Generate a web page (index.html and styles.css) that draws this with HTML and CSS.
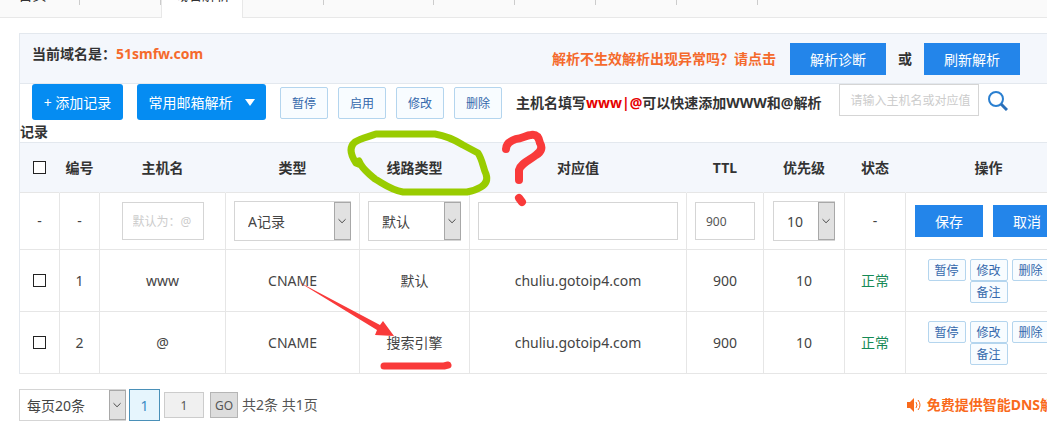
FILE: index.html
```html
<!DOCTYPE html>
<html lang="zh-CN">
<head>
    <meta charset="UTF-8">
    <meta name="viewport" content="width=device-width, initial-scale=1.0">
    <title>域名解析</title>
    <link rel="stylesheet" href="styles.css">
</head>
<body>
    <nav class="tabs">
        <a href="#" class="tab tab-first">首页</a>
        <a href="#" class="tab"></a>
        <a href="#" class="tab tab-active">域名解析</a>
        <a href="#" class="tab"></a>
        <a href="#" class="tab tab-wide"></a>
        <a href="#" class="tab"></a>
        <a href="#" class="tab"></a>
        <a href="#" class="tab"></a>
        <a href="#" class="tab"></a>
    </nav>

    <main class="panel">
        <div class="domain-bar">
            <div class="domain">当前域名是：<span class="orange">51smfw.com</span></div>
            <div class="diagnose">
                <span class="orange">解析不生效解析出现异常吗？请点击</span>
                <button type="button" class="btn-blue">解析诊断</button>
                <span>或</span>
                <button type="button" class="btn-blue">刷新解析</button>
            </div>
        </div>

        <form class="toolbar">
            <button type="button" class="btn-main btn-add">+ 添加记录</button>
            <button type="button" class="btn-main btn-mail">常用邮箱解析 <span class="caret"></span></button>
            <div class="batch">
                <button type="button" class="btn-light">暂停</button>
                <button type="button" class="btn-light">启用</button>
                <button type="button" class="btn-light">修改</button>
                <button type="button" class="btn-light">删除</button>
            </div>
            <p class="tip">主机名填写<span class="red">www|@</span>可以快速添加WWW和@解析</p>
            <input type="text" class="search" aria-label="搜索" placeholder="请输入主机名或对应值">
            <button type="submit" class="btn-search" aria-label="搜索">
                <svg width="20" height="20" viewBox="0 0 20 20">
                    <circle cx="8" cy="8" r="7" fill="none" stroke="#2a7fd0" stroke-width="2"/>
                    <path d="M13 13l6 6" stroke="#2a6fb8" stroke-width="3"/>
                </svg>
            </button>
        </form>
        <div class="caption">记录</div>

        <table class="records">
            <colgroup>
                <col class="c-check"><col class="c-no"><col class="c-host"><col class="c-type"><col class="c-line">
                <col class="c-value"><col class="c-ttl"><col class="c-prio"><col class="c-state"><col class="c-action">
            </colgroup>
            <thead>
                <tr>
                    <th><input type="checkbox" class="check" aria-label="全选"></th>
                    <th>编号</th>
                    <th>主机名</th>
                    <th>类型</th>
                    <th>线路类型</th>
                    <th>对应值</th>
                    <th>TTL</th>
                    <th>优先级</th>
                    <th>状态</th>
                    <th>操作</th>
                </tr>
            </thead>
            <tbody>
                <tr class="edit-row">
                    <td>-</td>
                    <td>-</td>
                    <td><input type="text" class="field field-host" aria-label="主机名" placeholder="默认为：@"></td>
                    <td>
                        <span class="select select-type">
                            <select aria-label="类型"><option>A记录</option><option>CNAME</option></select>
                            <svg class="arrow" viewBox="0 0 17 38"><path d="M4 17l4 4 4-4"/></svg>
                        </span>
                    </td>
                    <td>
                        <span class="select select-line">
                            <select aria-label="线路类型"><option>默认</option><option>搜索引擎</option></select>
                            <svg class="arrow" viewBox="0 0 17 38"><path d="M4 17l4 4 4-4"/></svg>
                        </span>
                    </td>
                    <td><input type="text" class="field field-value" aria-label="对应值"></td>
                    <td><input type="text" class="field field-ttl" aria-label="TTL" value="900"></td>
                    <td>
                        <span class="select select-prio">
                            <select aria-label="优先级"><option>10</option><option>20</option></select>
                            <svg class="arrow" viewBox="0 0 17 38"><path d="M4 17l4 4 4-4"/></svg>
                        </span>
                    </td>
                    <td>-</td>
                    <td>
                        <div class="edit-actions">
                            <button type="button" class="btn-blue btn-small">保存</button>
                            <button type="button" class="btn-blue btn-small">取消</button>
                        </div>
                    </td>
                </tr>
                <tr>
                    <td><input type="checkbox" class="check" aria-label="选择记录1"></td>
                    <td>1</td>
                    <td>www</td>
                    <td>CNAME</td>
                    <td>默认</td>
                    <td>chuliu.gotoip4.com</td>
                    <td>900</td>
                    <td>10</td>
                    <td class="normal">正常</td>
                    <td>
                        <div class="row-actions">
                            <button type="button" class="btn-mini">暂停</button>
                            <button type="button" class="btn-mini">修改</button>
                            <button type="button" class="btn-mini">删除</button>
                            <button type="button" class="btn-mini">备注</button>
                        </div>
                    </td>
                </tr>
                <tr>
                    <td><input type="checkbox" class="check" aria-label="选择记录2"></td>
                    <td>2</td>
                    <td>@</td>
                    <td>CNAME</td>
                    <td>搜索引擎</td>
                    <td>chuliu.gotoip4.com</td>
                    <td>900</td>
                    <td>10</td>
                    <td class="normal">正常</td>
                    <td>
                        <div class="row-actions">
                            <button type="button" class="btn-mini">暂停</button>
                            <button type="button" class="btn-mini">修改</button>
                            <button type="button" class="btn-mini">删除</button>
                            <button type="button" class="btn-mini">备注</button>
                        </div>
                    </td>
                </tr>
            </tbody>
        </table>

        <!-- hand-drawn marks over the table -->
        <svg class="marks" width="260" height="250" viewBox="290 125 260 250" fill="none" stroke-linecap="round" stroke-linejoin="round">
            <path stroke="#9c0" stroke-width="7" d="M361 165L356 163C350 154 349 147 355 142C361 138 368 137 376 134H435C447 136 455 140 463 145L478 153C483 161 483 168 486 174C488 180 486 184 481 187C476 190 472 191 467 192L403 192C391 190 384 184 375 179C369 174 365 171 361 165L359 161"/>
            <path stroke="#f93a3a" stroke-width="8" d="M506 149C506 144 510 141 516 139C522 139 526 135 531 135C537 134 539 138 540 143C543 148 541 152 536 155C530 160 521 163 519 170V180"/>
            <path stroke="#f93a3a" stroke-width="8" d="M519 198L522 202"/>
            <path stroke="#f93a3a" stroke-width="7" d="M384 366H444L448 365"/>
            <path fill="#f93a3a" d="M297 281L380 325L383 321L394 336L375 335L377 330Z"/>
        </svg>

        <footer class="footer">
            <form class="pager">
                <span class="select select-page">
                    <select aria-label="每页条数"><option>每页20条</option><option>每页50条</option></select>
                    <svg class="arrow" viewBox="0 0 17 30"><path d="M4 13l4 4 4-4"/></svg>
                </span>
                <a href="#" class="page-current">1</a>
                <input type="text" class="page-input" aria-label="页码" value="1">
                <button type="button" class="btn-go">GO</button>
                <span>共2条 共1页</span>
            </form>
            <a href="#" class="notice">
                <svg width="14" height="14" viewBox="0 0 14 14">
                    <path d="M0 4h3l4-4v14L3 10H0z" fill="#f96a1c"/>
                    <path d="M9 4q2 3 0 6M11 2q4 5 0 10" fill="none" stroke="#f96a1c"/>
                </svg>
                免费提供智能DNS解析
            </a>
        </footer>
    </main>
</body>
</html>
```

FILE: styles.css
```css
* {
    box-sizing: border-box;
}
body {
    margin: 0;
    overflow: hidden;
    background: #fff;
    color: #444;
    font-family: "Noto Sans", "Noto Sans CJK SC", sans-serif;
    font-size: 14px;
    line-height: 20px;
}
button, input, select {
    margin: 0;
    font-family: inherit;
    font-size: 14px;
}
button {
    padding: 0;
    cursor: pointer;
    white-space: nowrap;
}
a {
    text-decoration: none;
}
.orange {
    color: #f56a2c;
}
.red {
    color: #e60000;
}

/* tabs */
.tabs {
    display: flex;
    height: 18px;
    background: #fafafa;
    border-bottom: 1px solid #e8e8e8;
}
.tab {
    display: flex;
    align-items: flex-end;
    justify-content: center;
    width: 81px;
    height: 5px;
    border-right: 1px solid #ccc;
    color: #333;
}
.tab-first {
    width: 80px;
    padding-right: 14px;
}
.tab-wide {
    width: 110px;
}
.tab-active {
    width: 82px;
    height: 18px;
    padding-bottom: 13px;
    border: 1px solid #e8e8e8;
    border-width: 0 1px;
    background: #fff;
}

/* panel */
.panel {
    margin: 15px -25px 0 19px;
    border-left: 1px solid #e3e8ee;
}
.domain-bar {
    display: flex;
    justify-content: space-between;
    height: 51px;
    padding: 9px 52px 0 12px;
    background: #f4f7fc;
    border: 1px solid #e3e8ee;
    border-width: 1px 0;
    color: #333;
    font-weight: bold;
}
.domain {
    padding-top: 1px;
}
.diagnose {
    display: flex;
    align-items: center;
    gap: 12px;
    height: 32px;
}
.diagnose .orange {
    margin-right: 2px;
}
.btn-blue {
    width: 96px;
    height: 32px;
    border: 0;
    background: #2385ea;
    color: #fff;
}
.btn-small {
    width: 68px;
}

/* toolbar */
.toolbar {
    display: flex;
    align-items: flex-start;
    height: 38px;
    padding-left: 12px;
}
.btn-main {
    height: 36px;
    border: 0;
    border-radius: 3px;
    background: #058cf2;
    color: #fff;
}
.btn-add {
    width: 91px;
    margin-right: 14px;
}
.btn-mail {
    display: flex;
    align-items: center;
    justify-content: center;
    gap: 12px;
    width: 129px;
    margin-right: 14px;
}
.caret {
    border: 5px solid transparent;
    border-top: 7px solid #fff;
    border-bottom: 0;
}
.batch {
    display: flex;
    gap: 10px;
    padding-top: 3px;
}
.btn-light, .btn-mini {
    border: 1px solid #b4d5ee;
    border-radius: 2px;
    background: #f8fcff;
    color: #3468ac;
    font-size: 12px;
}
.btn-light {
    width: 48px;
    height: 32px;
}
.tip {
    margin: 9px 18px 0 14px;
    color: #333;
    font-weight: bold;
    white-space: nowrap;
}
.search {
    width: 140px;
    height: 32px;
    padding: 0 8px 0 10px;
    border: 1px solid #d5d5d5;
    font-size: 12px;
}
::placeholder {
    color: #ccc;
}
.btn-search {
    height: 20px;
    margin: 7px 0 0 9px;
    border: 0;
    background: none;
}
.caption {
    color: #333;
    font-weight: bold;
}

/* records */
.records {
    width: 100%;
    table-layout: fixed;
    border-collapse: separate;
    border-spacing: 0;
    border-top: 1px solid #e3e8ee;
}
.c-check, .c-no { width: 40px; }
.c-host { width: 126px; }
.c-type { width: 134px; }
.c-line { width: 110px; }
.c-ttl { width: 77px; }
.c-prio { width: 81px; }
.c-state { width: 61px; }
.c-action { width: 166px; }
th, td {
    height: 62px;
    padding: 0;
    border-right: 1px solid #e6e6e6;
    border-bottom: 1px solid #e6e6e6;
    text-align: center;
}
th {
    height: 50px;
    border-right-color: #f4f7fc;
    background: #f4f7fc;
    color: #333;
}
.edit-row td {
    height: 57px;
}
.check {
    appearance: none;
    display: block;
    width: 13px;
    height: 13px;
    margin: 0 auto;
    border: 1px solid #222;
    background: #fff;
}
.normal {
    color: #158a56;
}
.field {
    height: 38px;
    padding: 0 10px;
    border: 1px solid #d5d5d5;
    color: #555;
    font-size: 12px;
}
.field-host { width: 82px; }
.field-value { width: 200px; }
.field-ttl { width: 60px; }
.select {
    position: relative;
    display: inline-block;
    height: 40px;
    vertical-align: middle;
}
.select select {
    appearance: none;
    width: 100%;
    height: 100%;
    padding: 0 18px 0 13px;
    border: 1px solid #d5d5d5;
    border-radius: 0;
    background: #fff;
    color: #444;
}
.select-type { width: 117px; }
.select-line { width: 93px; }
.select-prio { width: 62px; }
.arrow {
    position: absolute;
    top: 1px;
    right: 0;
    width: 17px;
    height: calc(100% - 2px);
    border: 1px solid #a8a8a8;
    background: #e1e1e1;
    fill: none;
    stroke: #333;
    pointer-events: none;
}
.edit-actions {
    display: flex;
    gap: 10px;
    padding-left: 9px;
}
.row-actions {
    display: flex;
    flex-wrap: wrap;
    justify-content: center;
    gap: 0 4px;
    padding: 0 16px;
}
.btn-mini {
    width: 38px;
    height: 22px;
}
.marks {
    position: absolute;
    top: 125px;
    left: 290px;
    pointer-events: none;
}

/* footer */
.footer {
    display: flex;
    align-items: center;
    justify-content: space-between;
    margin-left: -1px;
    padding: 15px 4px 0 0;
    background: #fff;
}
.pager {
    display: flex;
    align-items: center;
    color: #555;
}
.select-page {
    width: 107px;
    height: 32px;
    margin-right: 3px;
}
.select-page select {
    padding-left: 7px;
}
.page-current {
    width: 31px;
    height: 32px;
    margin-right: 4px;
    border: 1px solid #4a90b8;
    background: #e6f5fd;
    color: #3a8cc4;
    line-height: 32px;
    text-align: center;
}
.page-input {
    width: 40px;
    height: 26px;
    margin-right: 6px;
    border: 1px solid #ccc;
    background: #f0f0f0;
    color: #555;
    font-size: 12px;
    text-align: center;
}
.btn-go {
    width: 28px;
    height: 26px;
    margin-right: 4px;
    border: 1px solid #b5b5b5;
    background: #ddd;
    color: #555;
    font-size: 12px;
}
.notice {
    display: flex;
    align-items: center;
    gap: 6px;
    color: #f96a1c;
    font-weight: bold;
    white-space: nowrap;
}
```
